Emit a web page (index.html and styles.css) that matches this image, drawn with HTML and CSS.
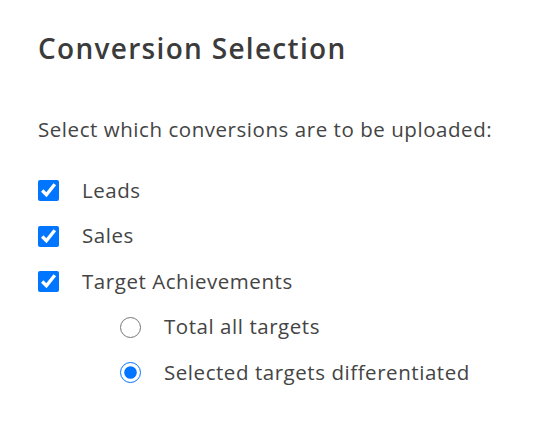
FILE: index.html
```html
<!DOCTYPE html>
<html>
<head>
<meta charset="utf-8">
<link rel="stylesheet" href="styles.css">
</head>
<body>
<div class="panel">
  <h1 class="title">Conversion Selection</h1>
  <p class="intro">Select which conversions are to be uploaded:</p>
  <ul class="options">
    <li class="option"><label class="row"><input type="checkbox" class="check" checked><span>Leads</span></label></li>
    <li class="option"><label class="row"><input type="checkbox" class="check" checked><span>Sales</span></label></li>
    <li class="option"><label class="row"><input type="checkbox" class="check" checked><span>Target Achievements</span></label>
      <ul class="sub">
        <li class="option"><label class="row"><input type="radio" name="t" class="radio"><span>Total all targets</span></label></li>
        <li class="option"><label class="row"><input type="radio" name="t" class="radio" checked><span>Selected targets differentiated</span></label></li>
      </ul>
    </li>
  </ul>
</div>
</body>
</html>
```

FILE: styles.css
```css
html, body { margin: 0; padding: 0; background: #fff; }
body { font-family: "Open Sans", sans-serif; color: #444; }
.panel { padding: 28px 38px; }
.title { margin: 0; font-size: 28px; font-weight: 600; letter-spacing: 1.3px; color: #3b3b3b; line-height: 40px; }
.intro { margin: 46px 0 0; font-size: 20.5px; letter-spacing: 0.55px; line-height: 30px; }
.options, .sub { list-style: none; margin: 0; padding: 0; }
.options { margin-top: 23px; }
.sub { padding-left: 82px; }
.row { display: flex; align-items: center; gap: 23px; height: 45.5px; font-size: 20.5px; letter-spacing: 0.55px; }
.check { width: 21px; height: 21px; margin: 2px 0 0; accent-color: #0075ff; }
.radio { width: 21px; height: 21px; margin: 2px 0 0; accent-color: #0075ff; }
```
